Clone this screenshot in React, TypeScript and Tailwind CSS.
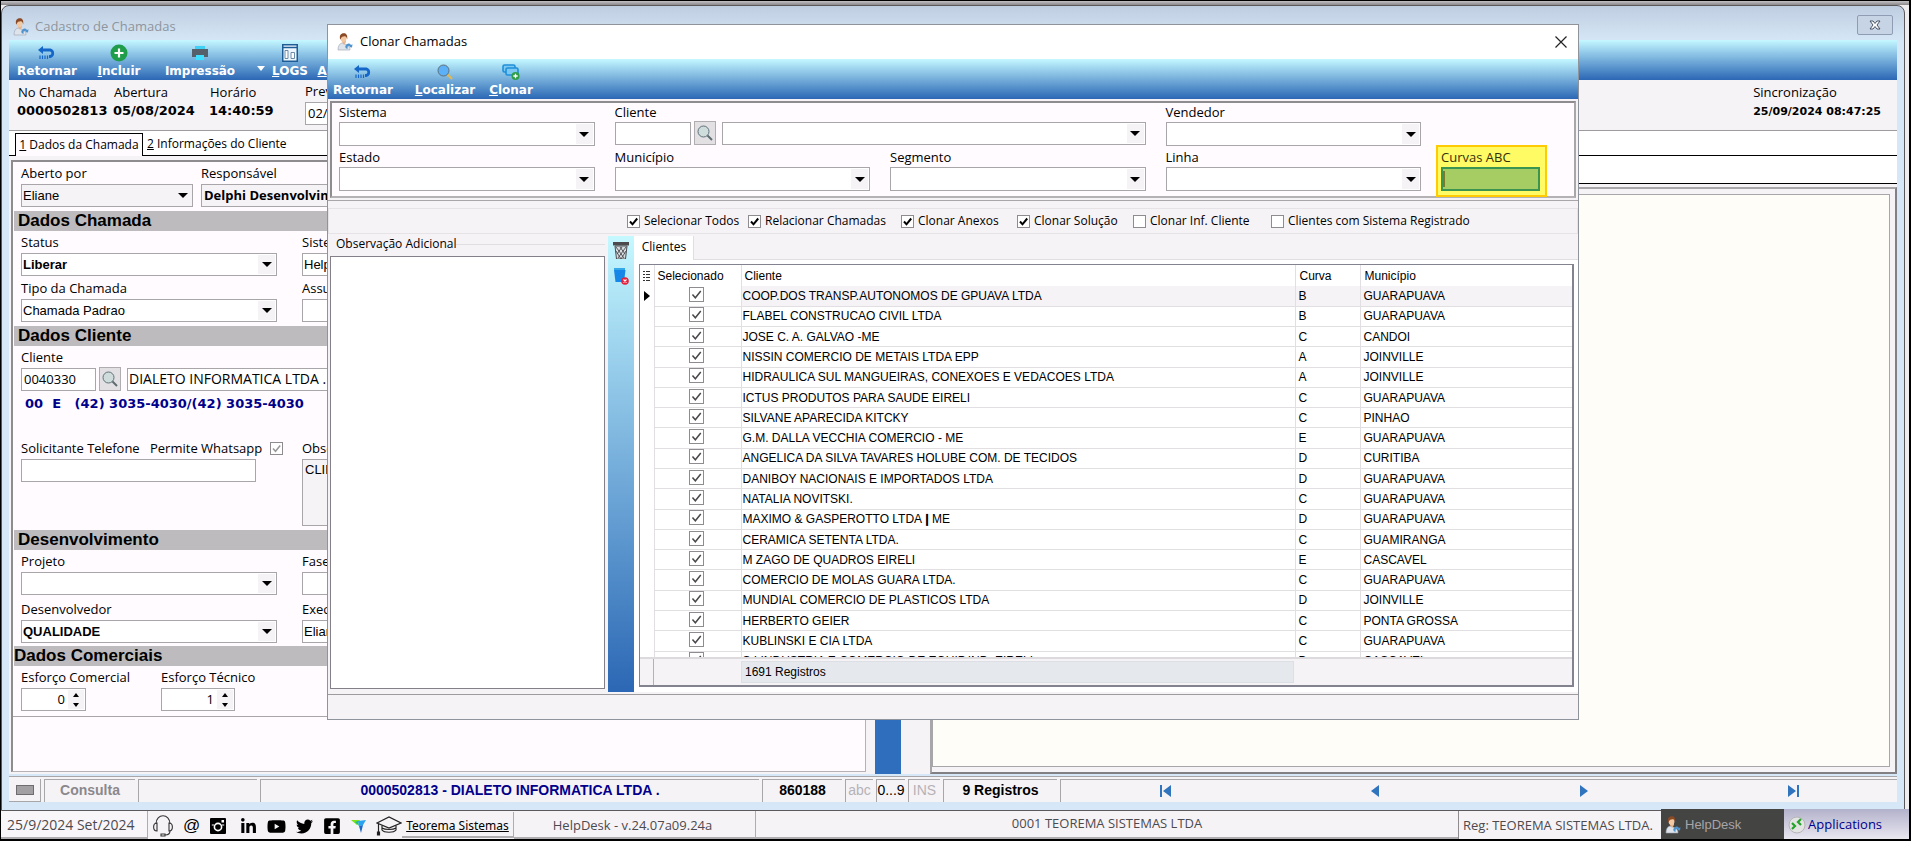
import { useState } from 'react';
import type { ReactNode } from 'react';
import { FaFacebookSquare, FaLinkedinIn, FaTwitter, FaYoutube } from 'react-icons/fa';

interface ClientRow {
  name: string;
  curve: string;
  city: string;
}

const clients: ClientRow[] = [
  { name: 'COOP.DOS TRANSP.AUTONOMOS DE GPUAVA LTDA', curve: 'B', city: 'GUARAPUAVA' },
  { name: 'FLABEL CONSTRUCAO CIVIL LTDA', curve: 'B', city: 'GUARAPUAVA' },
  { name: 'JOSE C. A. GALVAO -ME', curve: 'C', city: 'CANDOI' },
  { name: 'NISSIN COMERCIO DE METAIS LTDA EPP', curve: 'A', city: 'JOINVILLE' },
  { name: 'HIDRAULICA SUL MANGUEIRAS, CONEXOES E VEDACOES LTDA', curve: 'A', city: 'JOINVILLE' },
  { name: 'ICTUS PRODUTOS PARA SAUDE EIRELI', curve: 'C', city: 'GUARAPUAVA' },
  { name: 'SILVANE APARECIDA KITCKY', curve: 'C', city: 'PINHAO' },
  { name: 'G.M. DALLA VECCHIA COMERCIO - ME', curve: 'E', city: 'GUARAPUAVA' },
  { name: 'ANGELICA DA SILVA TAVARES HOLUBE COM. DE TECIDOS', curve: 'D', city: 'CURITIBA' },
  { name: 'DANIBOY NACIONAIS E IMPORTADOS LTDA', curve: 'D', city: 'GUARAPUAVA' },
  { name: 'NATALIA NOVITSKI.', curve: 'C', city: 'GUARAPUAVA' },
  { name: 'MAXIMO & GASPEROTTO LTDA❙ME', curve: 'D', city: 'GUARAPUAVA' },
  { name: 'CERAMICA SETENTA LTDA.', curve: 'C', city: 'GUAMIRANGA' },
  { name: 'M ZAGO DE QUADROS EIRELI', curve: 'E', city: 'CASCAVEL' },
  { name: 'COMERCIO DE MOLAS GUARA LTDA.', curve: 'C', city: 'GUARAPUAVA' },
  { name: 'MUNDIAL COMERCIO DE PLASTICOS LTDA', curve: 'D', city: 'JOINVILLE' },
  { name: 'HERBERTO GEIER', curve: 'C', city: 'PONTA GROSSA' },
  { name: 'KUBLINSKI E CIA LTDA', curve: 'C', city: 'GUARAPUAVA' },
  { name: 'S.I INDUSTRIA E COMERCIO DE EQUIP.IND. EIRELI', curve: 'D', city: 'CASCAVEL' },
];

function PersonIcon() {
  return (
    <svg viewBox="0 0 16 18" className="h-[18px] w-4 shrink-0">
      <path d="M1 17c0-4 1.500-6.500 4-7l3 1 3 1.500c1.500 1 2 2.500 2 4.500z" fill="#dfe3ea" stroke="#9aa3b0" strokeWidth=".6" />
      <path d="M5 9l2 3 2-3v-2H5z" fill="#e8b48c" />
      <ellipse cx="6.500" cy="5" rx="3" ry="4" fill="#f3c9a4" />
      <path d="M3 6C2.200 1.500 4.500.2 6.800.2S10.800 2 10.200 6.500C9.700 4.500 9.200 3.600 8.200 3.200 6 3.400 4.200 3.400 3.600 6.500z" fill="#8a4a26" />
      <path d="M9 15.500a3 3 0 0 1 5-3.500l1.500-.8-.5 3.300-3-.5 1-.8a1.500 1.500 0 0 0-2 2.300z" fill="#4d93cf" />
    </svg>
  );
}

function ReturnIcon() {
  return (
    <svg viewBox="0 0 18 14" className="h-[14px] w-[18px]">
      <path d="M0 4L5 0v2.400h7.500a5 5 0 0 1 0 9.600H11V9h1a1.800 1.800 0 0 0 0-3.500H5V8z" fill="#1466c8" />
      <path d="M2 9.500v3.500M4.500 9.500v3.500M7 9.500v3.500M9.500 9.500v3.500" stroke="#1466c8" strokeWidth="1.200" />
    </svg>
  );
}

function PlusIcon() {
  return (
    <svg viewBox="0 0 18 18" className="size-[18px]">
      <circle cx="9" cy="9" r="8.500" fill="#1f9d4a" />
      <path d="M9 4.500v9M4.500 9h9" stroke="#fff" strokeWidth="2.200" />
    </svg>
  );
}

function PrinterIcon() {
  return (
    <svg viewBox="0 0 18 14" className="h-[14px] w-[18px]">
      <path d="M4 0h10v4H4z" fill="#3fd0f5" />
      <path d="M1 3h16v8H1z" fill="#56606b" />
      <path d="M5 9h8v5H5z" fill="#3fe0ff" />
    </svg>
  );
}

function LogsIcon() {
  return (
    <svg viewBox="0 0 16 18" className="h-[18px] w-4">
      <path d="M.75.75h14.500v16.500H.75z" fill="#eef7ff" stroke="#1d5c94" strokeWidth="1.500" />
      <path d="M1 3.500h14" stroke="#1d5c94" strokeWidth="1.500" />
      <path d="M3 6.500h3v8H3zM9 8.500h3.500v6H9z" fill="#fff" stroke="#5c7f9f" strokeWidth=".9" />
    </svg>
  );
}

function SearchIcon({ lens, handle }: { lens: string; handle: string }) {
  return (
    <svg viewBox="0 0 16 16" className="size-4">
      <path d="M10 10l5 5" stroke={handle} strokeWidth="2" />
      <circle cx="6.500" cy="6.500" r="5.500" fill={lens} stroke="#5e7079" strokeWidth="1" />
    </svg>
  );
}

function CloneIcon() {
  return (
    <svg viewBox="0 0 18 16" className="h-4 w-[18px]">
      <rect x="1" y="1" width="12" height="7" rx="1.500" fill="#7cc8f2" stroke="#1f8fd8" strokeWidth="1.600" />
      <rect x="4" y="4" width="12" height="7" rx="1.500" fill="#7cc8f2" stroke="#1f8fd8" strokeWidth="1.600" />
      <circle cx="13.500" cy="12" r="4" fill="#2e9d48" />
      <path d="M13.500 9.800v4.400M11.300 12h4.400" stroke="#fff" strokeWidth="1.300" />
    </svg>
  );
}

function ToolButton({ icon, hotkey, label, className }: { icon: ReactNode; hotkey?: string; label: string; className: string }) {
  return (
    <button type="button" className={`flex flex-col items-center font-[family-name:'DejaVu_Sans',sans-serif] text-[12px] leading-4 font-bold text-white ${className}`}>
      <span className="flex h-[21px] items-center">{icon}</span>
      <span className="whitespace-nowrap">
        {hotkey && <span className="underline">{hotkey}</span>}
        {label}
      </span>
    </button>
  );
}

function Arrow() {
  return (
    <span className="pointer-events-none absolute inset-y-[2px] right-[2px] flex w-[17px] items-center justify-center bg-[#f6f3f7]">
      <svg viewBox="0 0 10 5" className="h-[5px] w-[10px]">
        <path d="M0 0h10L5 5z" fill="#000" />
      </svg>
    </span>
  );
}

interface FieldProps {
  id: string;
  label: string;
  value?: string;
  bold?: boolean;
  gray?: boolean;
  className?: string;
}

function SelectField({ id, label, value = '', bold, gray, className = '' }: FieldProps) {
  return (
    <div className={className}>
      <label htmlFor={id} className="block h-[22px] leading-[22px]">{label}</label>
      <div className="relative h-[23px]">
        <select
          id={id}
          className={`size-full appearance-none border border-[#a9a6aa] pl-px font-[family-name:'Liberation_Sans',sans-serif] ${gray ? 'bg-[#f6f3f7]' : 'bg-white'} ${bold ? 'font-bold' : ''}`}
        >
          <option>{value}</option>
        </select>
        <Arrow />
      </div>
    </div>
  );
}

function TextField({ id, label, value = '', bold, gray, className = '' }: FieldProps) {
  return (
    <div className={className}>
      <label htmlFor={id} className="block h-[22px] leading-[22px] whitespace-nowrap">{label}</label>
      <input
        id={id}
        defaultValue={value}
        className={`block h-[23px] w-full border border-[#a9a6aa] pb-[2px] pl-[2px] ${gray ? 'bg-[#f6f3f7]' : 'bg-white'} ${bold ? 'font-bold' : ''}`}
      />
    </div>
  );
}

function SpinField({ id, label, value, className }: { id: string; label: string; value: string; className: string }) {
  return (
    <div className="w-[140px]">
      <label htmlFor={id} className="block h-[22px] leading-[22px]">{label}</label>
      <div className={`relative h-[23px] ${className}`}>
        <input id={id} defaultValue={value} className="block size-full border border-[#a9a6aa] bg-white pr-5 pb-[2px] text-right" />
        <span className="pointer-events-none absolute inset-y-[2px] right-[2px] flex w-4 items-center justify-center bg-[#f6f3f7]">
          <svg viewBox="0 0 6 14" className="h-[14px] w-[6px]">
            <path d="M0 4h6L3 0zM0 10h6l-3 4z" fill="#000" />
          </svg>
        </span>
      </div>
    </div>
  );
}

function SectionBar({ title, className }: { title: string; className: string }) {
  return (
    <h2 className={`ml-px h-5 bg-[#bdbbbd] font-[family-name:'Liberation_Sans',sans-serif] text-[17px] leading-5 font-bold ${className}`}>
      {title}
    </h2>
  );
}

function LookupButton({ className = '' }: { className?: string }) {
  return (
    <button type="button" aria-label="Procurar" className={`flex h-6 w-[22px] shrink-0 items-center justify-center border border-[#b0adb1] bg-[#e3e0e4] ${className}`}>
      <SearchIcon lens="#cfdcdc" handle="#5e6b70" />
    </button>
  );
}

function Tick({ checked, label, size = 'size-[13px]', color = '#000', width = '2', disabled }: {
  checked: boolean; label?: string; size?: string; color?: string; width?: string; disabled?: boolean;
}) {
  const [on, setOn] = useState(checked);
  return (
    <span className={`relative inline-block shrink-0 align-top ${size}`}>
      <input
        type="checkbox"
        aria-label={label}
        checked={on}
        disabled={disabled}
        onChange={() => setOn(!on)}
        className="block size-full appearance-none border border-[#8f8c90] bg-white"
      />
      {on && (
        <svg viewBox="0 0 13 13" className="pointer-events-none absolute inset-0 size-full">
          <path d="M3 6.500l2.500 2.800L10.200 3.500" fill="none" stroke={color} strokeWidth={width} />
        </svg>
      )}
    </span>
  );
}

function MainForm() {
  return (
    <form className="mt-1 ml-[2px] flex min-h-0 flex-1 flex-col border-t-2 border-r border-b border-l-2 border-[#8f8c90] border-r-[#b5b2b6] border-b-[#b5b2b6] bg-[#fffbff]">
      <div className="border-b border-[#a9a6aa] pb-[5px]">
        <div className="flex gap-2 px-[8px]">
          <SelectField id="aberto" label="Aberto por" value="Eliane" gray className="w-[172px]" />
          <TextField id="responsavel" label="Responsável" value="Delphi Desenvolvimento" bold gray className="w-[256px]" />
        </div>
        <SectionBar title="Dados Chamada" className="mt-1 pl-1" />
        <div className="grid grid-cols-[256px_256px] gap-x-[25px] gap-y-px px-[8px]">
          <SelectField id="status" label="Status" value="Liberar" bold />
          <SelectField id="sistema-chamada" label="Sistema" value="HelpDesk" />
          <SelectField id="tipo" label="Tipo da Chamada" value="Chamada Padrao" />
          <TextField id="assunto" label="Assunto" />
        </div>
        <SectionBar title="Dados Cliente" className="mt-1 pl-1" />
        <div className="flex items-end px-[8px]">
          <TextField id="cliente-codigo" label="Cliente" value="0040330" className="w-[75px]" />
          <LookupButton className="mx-[3px]" />
          <input aria-label="Nome do cliente" defaultValue="DIALETO INFORMATICA LTDA ." className="ml-[3px] h-[23px] w-[400px] border border-[#a9a6aa] bg-white pb-[2px] pl-px text-[14px]" />
        </div>
        <p className="pl-3 font-[family-name:'DejaVu_Sans',sans-serif] text-[13px] leading-[26px] font-bold whitespace-pre text-[#00008b]">
          {'00  E   (42) 3035-4030/(42) 3035-4030'}
        </p>
        <div className="mt-5 grid grid-cols-[256px_400px] gap-x-[25px] px-[8px]">
          <div className="relative">
            <TextField id="telefone" label="Solicitante Telefone" className="w-[235px]" />
            <label className="absolute top-0 left-[129px] flex h-[22px] items-center gap-2 leading-[22px] whitespace-nowrap">
              Permite Whatsapp
              <Tick checked disabled color="#9a979b" width="1.5" />
            </label>
          </div>
          <div>
            <label htmlFor="obs" className="block h-[22px] leading-[22px]">Observação</label>
            <textarea id="obs" defaultValue="CLIENTE" className="block h-[67px] w-full resize-none border border-[#a9a6aa] bg-[#f6f3f7] pl-[2px] font-[family-name:'Liberation_Sans',sans-serif]" />
          </div>
        </div>
        <SectionBar title="Desenvolvimento" className="mt-1 pl-1" />
        <div className="grid grid-cols-[256px_256px] gap-x-[25px] gap-y-[3px] px-[8px]">
          <SelectField id="projeto" label="Projeto" />
          <SelectField id="fase" label="Fase" />
          <SelectField id="desenvolvedor" label="Desenvolvedor" value="QUALIDADE" bold />
          <SelectField id="executor" label="Executor" value="Eliane" />
        </div>
        <SectionBar title="Dados Comerciais" className="mt-[3px]" />
        <div className="flex px-[8px]">
          <SpinField id="esforco-comercial" label="Esforço Comercial" value="0" className="w-[65px]" />
          <SpinField id="esforco-tecnico" label="Esforço Técnico" value="1" className="w-[74px]" />
        </div>
      </div>
    </form>
  );
}

function MainWindow() {
  return (
    <main className="mr-1 flex flex-1 flex-col rounded-t-lg border border-[#5c595d] bg-gradient-to-b from-[#bfcde0] to-[#d6e8f7] to-[36px] px-[7px] pb-2">
      <header className="flex h-[34px] items-center pt-2 pl-1">
        <PersonIcon />
        <h1 className="pl-[6px] text-[#8e959d]">Cadastro de Chamadas</h1>
        <button type="button" aria-label="Fechar janela" className="mr-1 mb-1 ml-auto flex h-5 w-9 items-center justify-center rounded-[2px] border border-[#8f9cb3] bg-[#c7d4e6]">
          <svg viewBox="0 0 12 10" className="h-[10px] w-3">
            <path d="M1 1h3l2 2.500L8 1h3L8 5l3 4H8L6 6.500 4 9H1l3-4z" fill="#fff" stroke="#4a5363" />
          </svg>
        </button>
      </header>

      <nav className="flex h-10 items-start bg-gradient-to-b from-[#c5f8ff] to-[#2b67b4] pt-[2px]">
        <ToolButton icon={<ReturnIcon />} label="Retornar" className="w-[76px]" />
        <ToolButton icon={<PlusIcon />} hotkey="I" label="ncluir" className="ml-1 w-[60px]" />
        <ToolButton icon={<PrinterIcon />} label="Impressão" className="ml-[10px] w-[82px]" />
        <svg viewBox="0 0 8 5" className="mt-6 ml-4 h-[5px] w-2">
          <path d="M0 0h8L4 5z" fill="#fff" />
        </svg>
        <ToolButton icon={<LogsIcon />} hotkey="L" label="OGS" className="ml-[7px] w-9" />
        <ToolButton icon={<LogsIcon />} hotkey="A" label="nexos" className="ml-[10px] w-12" />
      </nav>

      <section className="flex h-[51px] border-b border-[#9e9b9f] bg-[#f6f3f7] pl-2">
        <dl className="flex">
          <div className="w-24">
            <dt className="pt-[2px] pl-px leading-[20px]">No Chamada</dt>
            <dd className="font-[family-name:'DejaVu_Sans',sans-serif] leading-[18px] font-bold">0000502813</dd>
          </div>
          <div className="w-24">
            <dt className="pt-[2px] pl-px leading-[20px]">Abertura</dt>
            <dd className="font-[family-name:'DejaVu_Sans',sans-serif] leading-[18px] font-bold">05/08/2024</dd>
          </div>
          <div className="w-24">
            <dt className="pt-[2px] pl-px leading-[20px]">Horário</dt>
            <dd className="font-[family-name:'DejaVu_Sans',sans-serif] leading-[18px] font-bold">14:40:59</dd>
          </div>
        </dl>
        <TextField id="previsao" label="Previsão" value="02/09/2024" className="w-24" />
        <dl className="mr-4 ml-auto">
          <dt className="pt-[2px] leading-[20px]">Sincronização</dt>
          <dd className="font-[family-name:'DejaVu_Sans',sans-serif] text-[11px] leading-5 font-bold">25/09/2024 08:47:25</dd>
        </dl>
      </section>

      <div role="tablist" className="flex h-[25px] items-end border-b border-black bg-white pl-[6px] text-[12px]">
        <button type="button" role="tab" className="-mb-px h-[23px] w-[128px] border border-b-0 border-black bg-[#fffbff] whitespace-nowrap">
          <span className="underline">1</span> Dados da Chamada
        </button>
        <button type="button" role="tab" className="h-[22px] px-1">
          <span className="underline">2</span> Informações do Cliente
        </button>
      </div>

      <div className="flex flex-1 bg-[#f6f3f7]">
        <div className="flex w-[45.4%] flex-col pb-[2px]">
          <MainForm />
        </div>
        <div className="ml-[9px] w-[26px] bg-[#2e6ebd]" />
        <div className="ml-[29px] flex flex-1 flex-col">
          <div className="h-7 border-b border-black bg-white" />
          <div className="mt-[3px] flex flex-1 border-2 border-[#a9a6aa] border-r-[#838085] border-b-[#838085] p-[5px] pl-0">
            <textarea aria-label="Histórico" className="w-full resize-none border border-[#a9a6aa] bg-[#fffdf7]" />
          </div>
        </div>
      </div>

      <StatusBar />
    </main>
  );
}

function NavButton({ label, path }: { label: string; path: string }) {
  return (
    <button type="button" aria-label={label} className="flex flex-1 items-center justify-center">
      <svg viewBox="0 0 12 12" className="size-3">
        <path d={path} fill="#2f74bd" />
      </svg>
    </button>
  );
}

function StatusBar() {
  return (
    <footer className="mt-[2px] flex h-[26px] gap-[3px] border-t border-[#a9a6aa] bg-[#f6f3f7] pt-[2px] font-[family-name:'Liberation_Sans',sans-serif] text-[14px] leading-5">
      <div className="flex w-8 items-center justify-center border-r border-b border-[#a9a6aa]">
        <span className="h-[10px] w-[18px] border border-[#6f6c70] bg-[#a3a0a4]" />
      </div>
      <div className="w-[91px] border-t border-l border-[#a9a6aa] text-center font-bold text-[#8b888c]">Consulta</div>
      <div className="w-[119px] border-t border-l border-[#a9a6aa]" />
      <div className="w-[499px] border-t border-l border-[#a9a6aa] text-center font-bold text-[#00008b]">0000502813 - DIALETO INFORMATICA LTDA .</div>
      <div className="w-[80px] border-t border-l border-[#a9a6aa] text-center font-bold">860188</div>
      <div className="w-[28px] border-t border-l border-[#a9a6aa] text-center text-[#b5b2b6]">abc</div>
      <div className="w-[29px] border-t border-l border-[#a9a6aa] text-center">0...9</div>
      <div className="w-[32px] border-t border-l border-[#a9a6aa] text-center text-[#b5b2b6]">INS</div>
      <div className="w-[114px] border-t border-l border-[#a9a6aa] text-center font-bold">9 Registros</div>
      <div className="flex flex-1 border-t border-l border-[#a9a6aa]">
        <NavButton label="Primeiro" path="M0 0h2v12H0zM11 0v12L3 6z" />
        <NavButton label="Anterior" path="M10 0v12L2 6z" />
        <NavButton label="Próximo" path="M2 0v12l8-6z" />
        <NavButton label="Último" path="M10 0h2v12h-2zM1 0v12l8-6z" />
      </div>
    </footer>
  );
}

function Taskbar() {
  return (
    <footer className="flex h-[28px] items-stretch bg-[#f6f3f7] text-[#4d4a4e]">
      <div className="flex w-[147px] items-center border-r border-b-2 border-[#b0adb1] bg-[#f9f6fa] pl-[6px] text-[14px]">25/9/2024 Set/2024</div>
      <div className="flex w-[254px] items-center gap-[10px] pt-[2px] pl-[5px] text-black">
        <a href="#suporte" aria-label="Suporte">
          <svg viewBox="0 0 20 22" className="h-[22px] w-5" fill="none" stroke="#333" strokeWidth="1.1">
            <path d="M3 9C3-2 17-2 17 9M17 16c0 3-2 4-5 4M8 19h4v2H8z" />
            <path d="M4 8v8C-.5 16-.5 8 4 8zM16 8v8c4.500 0 4.500-8 0-8z" />
          </svg>
        </a>
        <a href="#email" aria-label="E-mail" className="w-[18px] text-center font-[family-name:'Liberation_Sans',sans-serif] text-[17px] leading-5">@</a>
        <a href="#instagram" aria-label="Instagram">
          <svg viewBox="0 0 16 16" className="size-4">
            <path d="M1 0h14a1 1 0 0 1 1 1v14a1 1 0 0 1-1 1H1a1 1 0 0 1-1-1V1a1 1 0 0 1 1-1z" fill="#000" />
            <circle cx="8" cy="9" r="3.600" fill="none" stroke="#fff" strokeWidth="1.600" />
            <path d="M11.500 2h2.500v2.500h-2.500zM1.800 6.500h2.400v1H1.800zM11.800 6.500h2.400v1h-2.400z" fill="#fff" />
          </svg>
        </a>
        <a href="#linkedin" aria-label="LinkedIn" className="ml-1"><FaLinkedinIn size={17} /></a>
        <a href="#youtube" aria-label="YouTube"><FaYoutube size={19} /></a>
        <a href="#twitter" aria-label="Twitter"><FaTwitter size={17} /></a>
        <a href="#facebook" aria-label="Facebook"><FaFacebookSquare size={18} /></a>
        <a href="#teorema" aria-label="Teorema">
          <svg viewBox="0 0 15 13" className="h-[13px] w-[15px]">
            <path d="M0 0h9L6 5z" fill="#7be319" />
            <path d="M4 2l3-1 1 5z" fill="#16c08a" />
            <path d="M7 1l8-1-3 5-4 1z" fill="#2aa3f0" />
            <path d="M8 6l4-1-2 8z" fill="#1668c9" />
          </svg>
        </a>
        <a href="#cursos" aria-label="Cursos">
          <svg viewBox="0 0 26 20" className="h-5 w-[26px]" fill="none" stroke="#222" strokeWidth="1.200">
            <path d="M1 7l12-6 12 6-12 5z" />
            <path d="M6 9.500V14c2 3 12 3 14 0V9.500M6 12c3 2 11 2 14 0M2.500 8v8" />
            <path d="M1.500 16h2v3h-2z" fill="#222" />
          </svg>
        </a>
      </div>
      <a href="#site" className="my-px flex w-[112px] items-center justify-center border-r border-b-2 border-[#b0adb1] pt-[3px] font-[family-name:'Noto_Sans',sans-serif] text-[12px] text-black underline">Teorema Sistemas</a>
      <div className="flex w-[242px] items-center justify-center border-r border-b-2 border-[#b0adb1] pt-[3px] pr-1">HelpDesk - v.24.07a09.24a</div>
      <div className="flex flex-1 items-center justify-center border-b-2 border-[#b0adb1]">0001 TEOREMA SISTEMAS LTDA</div>
      <div className="flex w-[203px] items-center border-l border-[#8f8c90] pt-[2px] pl-1 whitespace-nowrap">Reg: TEOREMA SISTEMAS LTDA.</div>
      <button type="button" className="-mt-[2px] flex w-[123px] items-center gap-1 bg-[#444442] pt-[2px] pl-1 font-[family-name:'Liberation_Sans',sans-serif] text-[13px] text-[#a7a4a8]">
        <PersonIcon />
        HelpDesk
      </button>
      <button type="button" className="-mt-[2px] flex w-[125px] items-center gap-[2px] bg-gradient-to-b from-[#b3b2cc] to-[#e9e7ef] pt-px pl-1 text-[#00008b]">
        <svg viewBox="0 0 18 18" className="size-[18px]">
          <circle cx="9" cy="9" r="8" fill="#e4e4e4" stroke="#b5b5b5" />
          <path d="M4 7l3 3-3 3M13 3l-3 3 3 3" fill="none" stroke="#23a428" strokeWidth="2.200" />
        </svg>
        Applications
      </button>
    </footer>
  );
}

function FilterSelect({ id, label }: { id: string; label: string }) {
  return (
    <div>
      <label htmlFor={id} className="block h-[19px] leading-[18px]">{label}</label>
      <div className="relative h-6">
        <select id={id} className="size-full appearance-none border border-[#a9a6aa] bg-white">
          <option></option>
        </select>
        <Arrow />
      </div>
    </div>
  );
}

function Filters() {
  return (
    <section className="mx-[2px] mt-[2px] border-2 border-[#8f8c90] border-r-[#a9a6aa] border-b-[#b5b2b6] bg-[#fffbff] pr-[34px] pb-[5px] pl-[7px]">
      <div className="grid grid-cols-[repeat(4,1fr)_99px] gap-x-5 gap-y-[2px]">
        <FilterSelect id="sistema" label="Sistema" />
        <div className="col-span-2">
          <label htmlFor="cliente" className="block h-[19px] leading-[18px]">Cliente</label>
          <div className="flex h-[23px]">
            <input id="cliente" className="h-[23px] w-[76px] border border-[#a9a6aa] bg-white" />
            <LookupButton className="-mt-px mr-[6px] ml-[3px]" />
            <div className="relative flex-1">
              <select aria-label="Nome do cliente" className="size-full appearance-none border border-[#a9a6aa] bg-white">
                <option></option>
              </select>
              <Arrow />
            </div>
          </div>
        </div>
        <FilterSelect id="vendedor" label="Vendedor" />
        <span />
        <FilterSelect id="estado" label="Estado" />
        <FilterSelect id="municipio" label="Município" />
        <FilterSelect id="segmento" label="Segmento" />
        <FilterSelect id="linha" label="Linha" />
        <div className="relative">
          <span className="absolute -top-[3px] -right-[7px] -bottom-[6px] -left-[5px] border-2 border-[#ffcb05] bg-[#fffb65]" />
          <label htmlFor="curvas" className="relative block h-[19px] leading-[18px] text-[#33300a]">Curvas ABC</label>
          <div className="relative flex h-6 items-center border-2 border-[#3b9450] bg-[#a5cd63]">
            <input id="curvas" className="h-4 w-full border-l-2 border-[#7f7a2a] bg-transparent" />
          </div>
        </div>
      </div>
    </section>
  );
}

const options = [
  { label: 'Selecionar Todos', checked: true },
  { label: 'Relacionar Chamadas', checked: true },
  { label: 'Clonar Anexos', checked: true },
  { label: 'Clonar Solução', checked: true },
  { label: 'Clonar Inf. Cliente', checked: false },
  { label: 'Clientes com Sistema Registrado', checked: false },
];

function ClientGrid() {
  return (
    <div className="flex h-[423px] flex-col border border-[#83838f] border-r-2 border-b-2 bg-white font-[family-name:'Liberation_Sans',sans-serif] text-[12px]">
      <div className="min-h-0 flex-1 overflow-hidden">
        <table className="h-[407px] w-full table-fixed border-collapse text-left">
          <colgroup>
            <col className="w-[14px]" />
            <col className="w-[87px]" />
            <col />
            <col className="w-[65px]" />
            <col className="w-[212px]" />
          </colgroup>
          <thead>
            <tr className="h-[21px]">
              <th className="p-0" aria-label="Indicador">
                <svg viewBox="0 0 8 12" className="mx-auto h-3 w-2">
                  <path d="M0 1.500h2M3 1.500h4M0 4.500h2M3 4.500h4M0 7.500h2M3 7.500h4M0 10.500h2M3 10.500h4" stroke="#333" />
                </svg>
              </th>
              <th className="border-x border-[#e1dfe2] p-0 pl-[3px] font-normal">Selecionado</th>
              <th className="border-x border-[#e1dfe2] p-0 pl-[3px] font-normal">Cliente</th>
              <th className="border-x border-[#e1dfe2] p-0 pl-1 font-normal">Curva</th>
              <th className="p-0 pl-1 font-normal">Município</th>
            </tr>
          </thead>
          <tbody>
            {clients.map((client, index) => (
              <tr key={client.name} className="h-5">
                <td className="p-0">
                  {index === 0 && (
                    <svg viewBox="0 0 6 10" className="mx-auto h-[10px] w-[6px]">
                      <path d="M0 0v10l6-5z" fill="#000" />
                    </svg>
                  )}
                </td>
                <td className="border border-t-0 border-[#e1dfe2] p-0 pr-[3px] text-center">
                  <Tick checked label={client.name} size="size-[15px]" color="#4a474b" width="1.3" />
                </td>
                <td className={`border border-t-0 border-[#e1dfe2] p-0 pl-px whitespace-nowrap ${index === 0 ? 'bg-[#f6f3f7]' : ''}`}>{client.name}</td>
                <td className={`border border-t-0 border-[#e1dfe2] p-0 pl-[3px] ${index === 0 ? 'bg-[#f6f3f7]' : ''}`}>{client.curve}</td>
                <td className={`border border-t-0 border-r-0 border-[#e1dfe2] p-0 pl-[3px] ${index === 0 ? 'bg-[#f6f3f7]' : ''}`}>{client.city}</td>
              </tr>
            ))}
          </tbody>
        </table>
      </div>
      <div className="flex h-[28px] border-t-2 border-[#dcdadd] bg-[#f6f3f7] py-[2px]">
        <div className="-my-[2px] w-[14px] border-r border-[#b5b2b6]" />
        <div className="w-[87px]" />
        <div className="flex flex-1 items-center border border-[#dcdfe4] bg-[#e5e9ee] pl-[3px]">1691 Registros</div>
        <div className="w-[278px]" />
      </div>
    </div>
  );
}

function CloneDialog() {
  return (
    <div role="dialog" aria-label="Clonar Chamadas" className="absolute top-[23px] right-[330px] left-[326px] border border-[#8f949c] bg-[#f6f3f7]">
      <header className="flex h-[34px] items-center bg-white pr-[11px] pl-[9px]">
        <PersonIcon />
        <h2 className="pl-[7px]">Clonar Chamadas</h2>
        <button type="button" aria-label="Fechar" className="ml-auto">
          <svg viewBox="0 0 12 12" className="size-3">
            <path d="M.5.5l11 11M11.500.5l-11 11" stroke="#222" strokeWidth="1.200" />
          </svg>
        </button>
      </header>
      <nav className="flex h-10 items-start bg-gradient-to-b from-[#c5f8ff] to-[#2b67b4] pt-[2px]">
        <ToolButton icon={<ReturnIcon />} label="Retornar" className="w-[70px]" />
        <ToolButton icon={<SearchIcon lens="#5bb0f7" handle="#e8b94a" />} hotkey="L" label="ocalizar" className="ml-[14px] w-[66px]" />
        <ToolButton icon={<CloneIcon />} hotkey="C" label="lonar" className="ml-2 w-[50px]" />
      </nav>

      <Filters />

      <div className="mt-[2px] h-px bg-[#a9a6aa]" />
      <fieldset className="mt-[7px] grid h-[26px] grid-cols-[121px_153px_116px_116px_138px_auto] items-center border border-[#e6e3e7] pl-[298px] text-[12px]">
        {options.map(option => (
          <label key={option.label} className="flex items-center gap-1 whitespace-nowrap">
            <Tick checked={option.checked} />
            {option.label}
          </label>
        ))}
      </fieldset>

      <div className="mt-[2px] flex text-[12px]">
        <div className="ml-[2px] flex w-[278px] flex-col pr-[3px] pb-[3px]">
          <div className="flex h-5 items-start">
            <label htmlFor="observacao" className="pl-[6px] leading-4">Observação Adicional</label>
            <span className="mt-2 h-px flex-1 bg-[#e1dee2]" />
          </div>
          <textarea id="observacao" className="min-h-0 flex-1 resize-none border border-[#83808a] bg-white" />
        </div>
        <div className="flex w-[26px] flex-col items-center gap-2 bg-gradient-to-b from-[#c5f8ff] to-[#2b67b4] pt-[6px]">
          <button type="button" aria-label="Limpar">
            <svg viewBox="0 0 16 17" className="h-[17px] w-4">
              <path d="M0 0h16v3.500H0z" fill="#4d4a4e" />
              <path d="M2 4h12l-1.500 13h-9z" fill="#d5dde0" stroke="#4d4a4e" />
              <path d="M3 5l8 11M7 5l5 7M13 5L5 16M9 5l-5 7M3 9l5 8M13 9l-5 8" stroke="#4d4a4e" strokeWidth=".9" />
            </svg>
          </button>
          <button type="button" aria-label="Excluir">
            <svg viewBox="0 0 16 18" className="h-[18px] w-4">
              <path d="M1 1h11v2H1z" fill="#35a9e8" />
              <path d="M1 3h11.500L11 15H2.500z" fill="#1686e8" />
              <circle cx="12" cy="14" r="3.800" fill="#e5213c" />
              <path d="M10.500 12.500l3 3M13.500 12.500l-3 3" stroke="#fff" strokeWidth="1.100" />
            </svg>
          </button>
        </div>
        <div className="min-w-0 flex-1">
          <div role="tablist" className="h-6 border-b border-[#e1dee2]">
            <button type="button" role="tab" className="block h-6 w-[60px] border-r border-[#e1dee2] bg-white pb-[2px] pl-px">Clientes</button>
          </div>
          <div className="bg-white pt-1 pr-1 pb-[5px] pl-[5px]">
            <ClientGrid />
          </div>
        </div>
      </div>
      <footer className="mt-[2px] h-[25px] border-t border-[#9e9b9f]" />
    </div>
  );
}

export default function App() {
  return (
    <div className="relative flex min-h-screen flex-col border border-r-2 border-b-2 border-black bg-[#efedf0] font-[family-name:'Open_Sans',sans-serif] text-[13px] text-black">
      <div className="h-1 bg-gradient-to-b from-[#c5c2c6] to-[#8b888c]" />
      <MainWindow />
      <Taskbar />
      <CloneDialog />
    </div>
  );
}
